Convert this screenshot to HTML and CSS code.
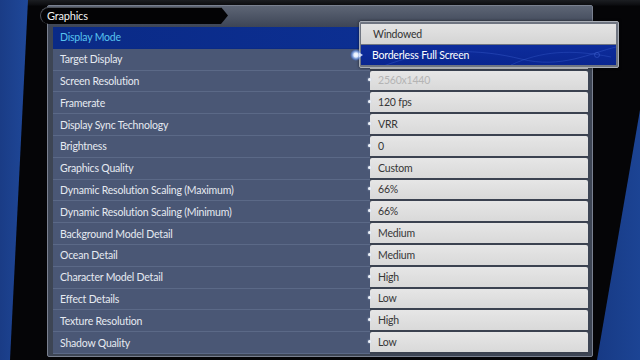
FILE: index.html
```html
<!DOCTYPE html>
<html>
<head>
<meta charset="utf-8">
<link rel="stylesheet" href="styles.css">
</head>
<body>
<div class="screen">
  <svg class="backdrop" width="640" height="360" viewBox="0 0 640 360">
    <defs>
      <linearGradient id="bl" x1="0" y1="0" x2="1" y2="0">
        <stop offset="0" stop-color="#1a3c86"/>
        <stop offset="1" stop-color="#1f4899"/>
      </linearGradient>
      <linearGradient id="br" x1="0" y1="0" x2="1" y2="0">
        <stop offset="0" stop-color="#173a85"/>
        <stop offset="1" stop-color="#1c4494"/>
      </linearGradient>
    </defs>
    <polygon points="0,0 28,0 10,360 0,360" fill="url(#bl)"/>
    <polygon points="640,110 640,360 597,360" fill="url(#br)"/>
  </svg>
  <div class="panel">
    <div class="panel-head"><div class="tab">Graphics</div></div>
    <div class="rows">
      <div class="row active"><div class="label">Display Mode</div><div class="value"></div></div>
      <div class="row"><div class="label">Target Display</div><div class="value"></div></div>
      <div class="row"><div class="label">Screen Resolution</div><div class="value dim">2560x1440</div></div>
      <div class="row"><div class="label">Framerate</div><div class="value">120 fps</div></div>
      <div class="row"><div class="label">Display Sync Technology</div><div class="value">VRR</div></div>
      <div class="row"><div class="label">Brightness</div><div class="value">0</div></div>
      <div class="row"><div class="label">Graphics Quality</div><div class="value">Custom</div></div>
      <div class="row"><div class="label">Dynamic Resolution Scaling (Maximum)</div><div class="value">66%</div></div>
      <div class="row"><div class="label">Dynamic Resolution Scaling (Minimum)</div><div class="value">66%</div></div>
      <div class="row"><div class="label">Background Model Detail</div><div class="value">Medium</div></div>
      <div class="row"><div class="label">Ocean Detail</div><div class="value">Medium</div></div>
      <div class="row"><div class="label">Character Model Detail</div><div class="value">High</div></div>
      <div class="row"><div class="label">Effect Details</div><div class="value">Low</div></div>
      <div class="row"><div class="label">Texture Resolution</div><div class="value">High</div></div>
      <div class="row"><div class="label">Shadow Quality</div><div class="value">Low</div></div>
    </div>
  </div>
  <div class="dropdown">
    <div class="opt">Windowed</div>
    <div class="opt selected">
      <svg class="swirl" width="255" height="20" viewBox="0 0 255 20">
        <path d="M20 22 C70 2 120 4 160 14 S230 8 255 2" fill="none" stroke="#3b5fd0" stroke-opacity="0.5" stroke-width="0.8"/>
        <path d="M150 20 C180 6 210 4 250 12" fill="none" stroke="#3b5fd0" stroke-opacity="0.45" stroke-width="0.8"/>
        <circle cx="236" cy="10" r="2.5" fill="none" stroke="#4a6ee0" stroke-opacity="0.5" stroke-width="0.8"/>
      </svg>
      <span>Borderless Full Screen</span>
    </div>
  </div>
  <svg class="cursor" width="14" height="12" viewBox="0 0 14 12">
    <defs>
      <radialGradient id="glow">
        <stop offset="0" stop-color="#ffffff"/>
        <stop offset="0.35" stop-color="#e4eeff"/>
        <stop offset="0.7" stop-color="#7aa8ff" stop-opacity="0.6"/>
        <stop offset="1" stop-color="#3c78ff" stop-opacity="0"/>
      </radialGradient>
    </defs>
    <circle cx="6" cy="6" r="6" fill="url(#glow)"/>
    <polygon points="9,3.5 13,6 9,8.5" fill="#dfe8ff" opacity="0.85"/>
  </svg>
</div>
</body>
</html>
```
FILE: styles.css
```css
html, body {
  margin: 0;
  padding: 0;
}
body {
  background: #050507;
  font-family: "Lato", "Open Sans", sans-serif;
}
.screen {
  position: relative;
  width: 640px;
  height: 360px;
  overflow: hidden;
  padding-top: 5px;
  box-sizing: border-box;
  background: linear-gradient(to bottom, #1c1e22 0, #0c0d10 5px, #050507 6px);
}
.backdrop {
  position: absolute;
  left: 0;
  top: 0;
}
.panel {
  position: relative;
  margin-left: 47px;
  width: 546px;
  height: 352px;
  box-sizing: border-box;
  border: 1px solid #7a8190;
  border-radius: 2px;
  background: #3d4554;
  display: flex;
  flex-direction: column;
}
.panel-head {
  height: 21px;
  padding-top: 1px;
  box-sizing: border-box;
  background: linear-gradient(to bottom, #5d6575, #3d4556);
}
.tab {
  margin-left: -8px;
  width: 188px;
  height: 17px;
  box-sizing: border-box;
  background: #030305;
  border-top: 1px solid #4c5058;
  border-left: 1px solid #4c5058;
  border-radius: 9px 0 0 9px;
  clip-path: polygon(0 0, calc(100% - 7px) 0, 100% 50%, calc(100% - 7px) 100%, 0 100%);
  color: #f2f2f2;
  font-size: 11px;
  letter-spacing: -0.2px;
  line-height: 16px;
  padding-left: 6px;
}
.rows {
  padding: 0 4px 0 5px;
  display: flex;
  flex-direction: column;
}
.row {
  display: grid;
  grid-template-columns: 317px 1fr;
  height: 21.8px;
}
.label {
  background: #4a5775;
  border-bottom: 1px solid #5b6987;
  color: #e6eaf1;
  font-size: 10.5px;
  letter-spacing: -0.2px;
  padding-left: 7px;
  display: flex;
  align-items: center;
}
.row.active .label {
  background: linear-gradient(to right, #0a2a86, #0c2f92);
  border-bottom-color: #0a2a86;
  color: #58c3ef;
}
.value {
  position: relative;
  background: linear-gradient(to bottom, #e6e6e6, #d9d9d9);
  border-bottom: 2px solid #3b4250;
  border-radius: 2px 2px 0 0;
  color: #363636;
  font-size: 10.5px;
  letter-spacing: -0.2px;
  padding-left: 8px;
  display: flex;
  align-items: center;
}
.value::before {
  content: "";
  position: absolute;
  left: -2px;
  top: 50%;
  margin-top: -2px;
  width: 3px;
  height: 3px;
  border-radius: 50%;
  background: #eef2fa;
  box-shadow: 0 0 2px #c8d8f0;
}
.value.dim {
  color: #b4b4b4;
}
.dropdown {
  position: absolute;
  left: 359px;
  top: 21px;
  width: 260px;
  height: 47px;
  box-sizing: border-box;
  border: 1px solid #a9aeb6;
  border-radius: 2px;
  background: #6f7581;
  padding: 2px 2px 2px 1px;
  display: flex;
  flex-direction: column;
  gap: 1px;
  box-shadow: 0 0 3px rgba(0,0,0,0.6);
}
.opt {
  position: relative;
  height: 20px;
  font-size: 10.5px;
  letter-spacing: -0.2px;
  display: flex;
  align-items: center;
  padding-left: 12px;
  color: #333;
  background: linear-gradient(to bottom, #e4e4e4, #d4d4d4);
}
.opt.selected {
  padding-left: 11px;
  color: #ffffff;
  background: linear-gradient(to bottom, #0d2c9c, #0a2690);
  overflow: hidden;
}
.opt span {
  position: relative;
}
.swirl {
  position: absolute;
  left: 0;
  top: 0;
}
.cursor {
  position: absolute;
  left: 350px;
  top: 49px;
}
```
